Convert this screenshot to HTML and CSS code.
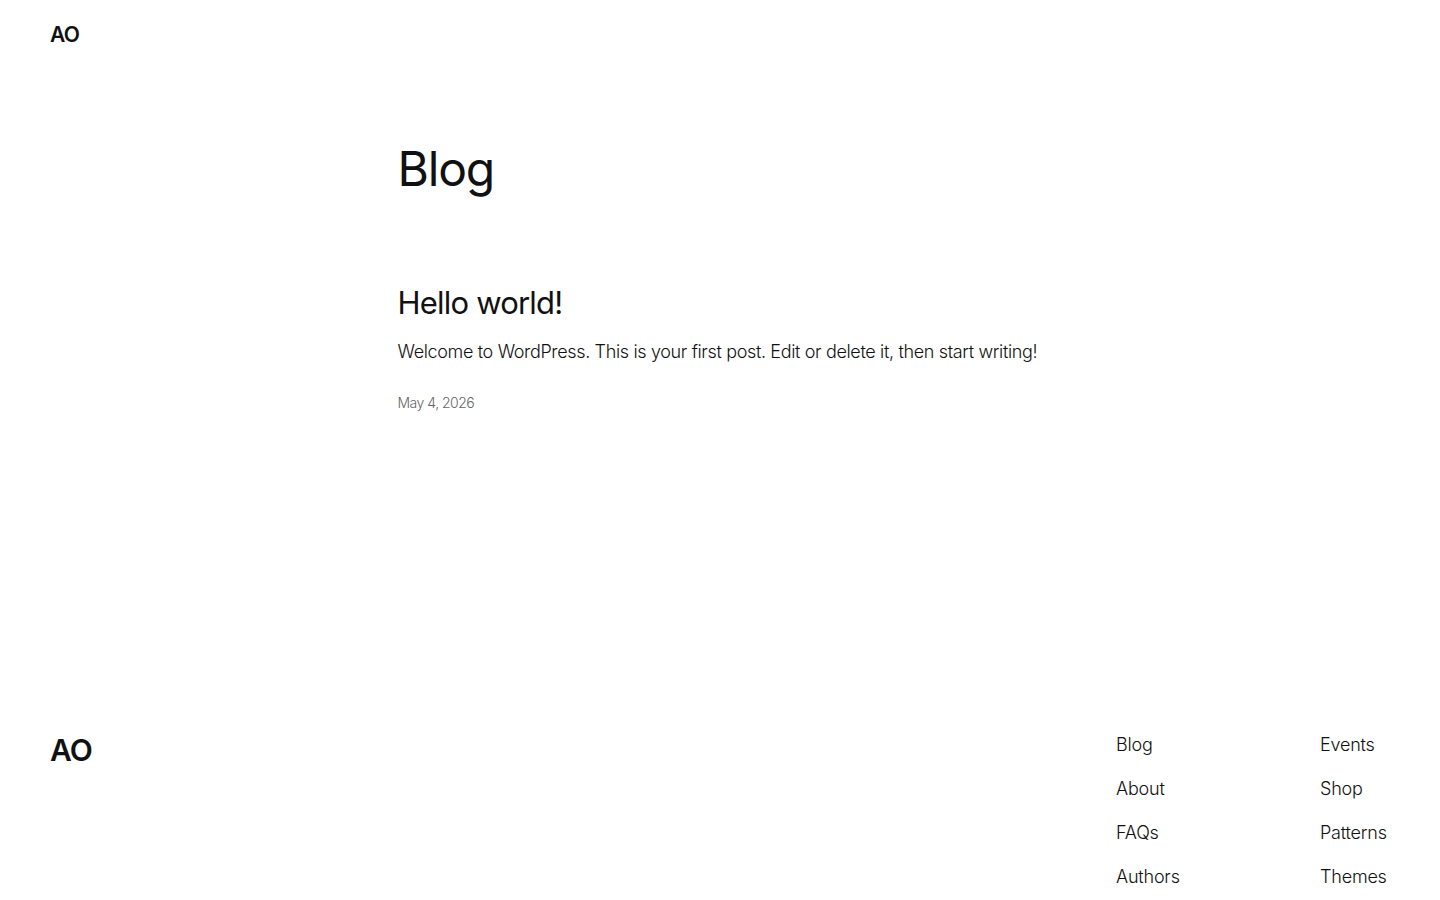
FILE: index.html
```html
<!DOCTYPE html>
<html lang="en">
<head>
  <meta charset="UTF-8" />
  <meta name="viewport" content="width=device-width, initial-scale=1.0" />
  <title>Blog – AO</title>
  <link rel="stylesheet" href="styles.css">
</head>
<body>
  <header class="site-header">
    <a class="site-title" href="#">AO</a>
  </header>

  <main class="site-main">
    <h1 class="page-title">Blog</h1>
    <article class="post">
      <h2 class="post-title"><a href="#">Hello world!</a></h2>
      <p class="post-excerpt">Welcome to WordPress. This is your first post. Edit or delete it, then start writing!</p>
      <time class="post-date" datetime="2026-05-04">May 4, 2026</time>
    </article>
  </main>

  <footer class="site-footer">
    <a class="footer-title" href="#">AO</a>
    <nav class="footer-nav">
      <ul class="nav-col">
        <li><a href="#">Blog</a></li>
        <li><a href="#">About</a></li>
        <li><a href="#">FAQs</a></li>
        <li><a href="#">Authors</a></li>
      </ul>
      <ul class="nav-col">
        <li><a href="#">Events</a></li>
        <li><a href="#">Shop</a></li>
        <li><a href="#">Patterns</a></li>
        <li><a href="#">Themes</a></li>
      </ul>
    </nav>
  </footer>
</body>
</html>
```

FILE: styles.css
```css
body {
  margin: 0;
  font-family: Inter, 'Noto Sans', sans-serif;
  font-weight: 300;
  background: #fff;
  color: #111;
}
a {
  color: inherit;
  text-decoration: none;
}
.site-header {
  padding: 21px 50px;
}
.site-title {
  font-size: 21px;
  line-height: 28px;
  font-weight: 600;
  letter-spacing: -0.6px;
}
.site-main {
  width: 645px;
  margin: 0 auto;
  padding-top: 70px;
  min-height: 591px;
}
.page-title {
  margin: 0;
  font-size: 48px;
  line-height: 1.2;
  font-weight: 400;
  letter-spacing: -1.2px;
}
.post {
  margin-top: 86px;
}
.post-title {
  margin: 0;
  font-size: 31px;
  line-height: 1.2;
  font-weight: 400;
  letter-spacing: -0.8px;
}
.post-excerpt {
  margin: 17px 0 0;
  font-size: 18px;
  line-height: 1.5;
  letter-spacing: -0.35px;
}
.post-date {
  display: block;
  margin-top: 29px;
  font-size: 14px;
  color: #666;
  letter-spacing: -0.5px;
}
.site-footer {
  display: flex;
  justify-content: space-between;
  align-items: flex-start;
  padding: 0 50px;
}
.footer-title {
  font-size: 30px;
  line-height: 1.2;
  font-weight: 600;
  letter-spacing: -1px;
  margin-top: 1px;
}
.footer-nav {
  display: grid;
  grid-template-columns: 204px 70px;
}
.nav-col {
  list-style: none;
  margin: 0;
  padding: 0;
}
.nav-col li {
  font-size: 18px;
  line-height: 27px;
  margin-bottom: 17px;
  letter-spacing: -0.2px;
}
```
